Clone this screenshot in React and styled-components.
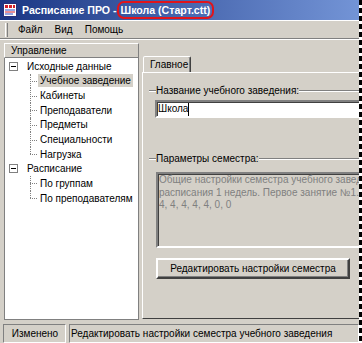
import styled, { createGlobalStyle } from "styled-components";

const GlobalStyle = createGlobalStyle`
  html, body { margin: 0; padding: 0; background: #fff; }
  body {
    font-family: "Liberation Sans", Arial, sans-serif;
    font-size: 10px;
    color: #000;
  }
`;

const Screen = styled.div`
  display: flex;
  width: 362px;
  height: 343px;
  overflow: hidden;
`;

const Frame = styled.div`
  width: 359px;
  height: 343px;
  flex: none;
  overflow: hidden;
  background: #d4d0c8;
  display: flex;
  flex-direction: column;
`;

const TornEdge = styled.div`
  width: 3px;
  flex: none;
  background: repeating-linear-gradient(to bottom, #000 0 5px, #fff 5px 8px);
`;

const TitleBar = styled.div`
  height: 20px;
  flex: none;
  display: flex;
  align-items: center;
  gap: 5px;
  padding-left: 3px;
  background: linear-gradient(to right, #1a3684, #7394d6);
  color: #fff;
  font-weight: bold;
  font-size: 10.6px;
  white-space: nowrap;
`;

const Marked = styled.span`
  border: 2px solid #e0141b;
  border-radius: 7px;
  padding: 1px 2px 1px 1px;
  margin-left: -2px;
  line-height: 12px;
`;

const MenuBar = styled.div`
  height: 17px;
  flex: none;
  display: flex;
  align-items: center;
  padding-left: 5px;
  border-top: 1px solid #fff;
  border-bottom: 1px solid #808080;
`;

const Grip = styled.div`
  width: 1px;
  height: 14px;
  border-left: 1px solid #fff;
  border-right: 1px solid #808080;
  margin-right: 4px;
`;

const MenuItem = styled.span`
  padding: 0 6px;
`;

const Body = styled.div`
  flex: 1;
  min-height: 0;
  display: flex;
  padding: 3px 0 3px 4px;
  border-top: 1px solid #fff;
`;

const LeftPane = styled.div`
  width: 135px;
  flex: none;
  display: flex;
  flex-direction: column;
`;

const PaneHeader = styled.div`
  height: 13px;
  line-height: 13px;
  padding-left: 6px;
  border: 1px solid;
  border-color: #fff #808080 #808080 #fff;
`;

const Tree = styled.div`
  flex: 1;
  background: #fff;
  border: 1px solid #808080;
  border-top: none;
  padding-top: 1px;
`;

const Row = styled.div`
  height: 14.65px;
  display: flex;
  align-items: stretch;
  padding-left: ${(p) => (p.$child ? 25 : 4)}px;
  white-space: nowrap;
`;

const Expander = styled.span`
  align-self: center;
  width: 7px;
  height: 7px;
  border: 1px solid #808080;
  margin-right: 7px;
  display: flex;
  align-items: center;
  justify-content: center;
  &::before {
    content: "";
    width: 5px;
    height: 1px;
    background: #000;
  }
`;

const Branch = styled.span`
  width: 8px;
  position: relative;
  &::before {
    content: "";
    position: absolute;
    left: 0;
    top: 0;
    height: ${(p) => (p.$last ? "50%" : "100%")};
    border-left: 1px dotted #808080;
  }
  &::after {
    content: "";
    position: absolute;
    left: 0;
    top: 50%;
    width: 7px;
    border-top: 1px dotted #808080;
  }
`;

const Label = styled.span`
  align-self: center;
  line-height: 13px;
  padding: 0 2px;
  background: ${(p) => (p.$selected ? "#d4d0c8" : "transparent")};
`;

const RightPane = styled.div`
  width: 260px;
  flex: none;
  display: flex;
  flex-direction: column;
  padding: 13px 0 1px 3px;
`;

const TabStrip = styled.div`
  display: flex;
  height: 16px;
  position: relative;
  z-index: 1;
`;

const Tab = styled.div`
  margin-left: 1px;
  width: 48px;
  height: 16px;
  line-height: 16px;
  padding-left: 6px;
  box-sizing: border-box;
  background: #d4d0c8;
  border: 1px solid;
  border-bottom: none;
  border-color: #fff #404040 transparent #fff;
  border-radius: 2px 2px 0 0;
  box-shadow: inset -1px 0 #808080;
`;

const TabPage = styled.div`
  flex: 1;
  display: flex;
  flex-direction: column;
  align-items: flex-start;
  padding: 11px 0 0 6px;
  border-top: 1px solid #fff;
  border-left: 1px solid #fff;
  border-bottom: 1px solid #404040;
`;

const SectionHeader = styled.div`
  align-self: stretch;
  display: flex;
  align-items: center;
  height: 13px;
  margin-top: ${(p) => p.$top || 0}px;
  white-space: nowrap;
  &::before,
  &::after {
    content: "";
    height: 0;
    border-top: 1px solid #808080;
    border-bottom: 1px solid #fff;
  }
  &::before {
    width: 7px;
  }
  &::after {
    flex: 1;
  }
`;

const TextInput = styled.div`
  margin: 3px 0 0 6px;
  width: 230px;
  height: 14px;
  line-height: 14px;
  background: #fff;
  border: 2px solid;
  border-color: #808080 #fff #fff #808080;
  box-shadow: inset 1px 1px #404040;
  padding-left: 1px;
  display: flex;
  align-items: center;
`;

const Caret = styled.span`
  width: 1px;
  height: 13px;
  background: #000;
`;

const Memo = styled.div`
  margin: 7px 0 0 7px;
  width: 230px;
  height: 72px;
  border: 2px solid;
  border-color: #808080 #fff #fff #808080;
  box-shadow: inset 1px 1px #404040;
  padding-left: 1px;
  color: #808080;
  line-height: 12.5px;
  white-space: nowrap;
  overflow: hidden;
`;

const Button = styled.div`
  margin: 10px 0 0 7px;
  width: 190px;
  height: 17px;
  line-height: 17px;
  text-align: center;
  border: 2px solid;
  border-color: #fff #404040 #404040 #fff;
  box-shadow: inset -1px -1px #808080;
`;

const StatusBar = styled.div`
  height: 20px;
  flex: none;
  display: flex;
  gap: 3px;
  padding: 1px 0 0 3px;
  box-sizing: border-box;
`;

const StatusPanel = styled.div`
  width: ${(p) => p.$width}px;
  flex: ${(p) => (p.$width ? "none" : 1)};
  height: 17px;
  line-height: 17px;
  padding-left: 1px;
  text-align: ${(p) => (p.$center ? "center" : "left")};
  border: 1px solid;
  border-color: #808080 #fff #fff #808080;
  white-space: nowrap;
  overflow: hidden;
`;

function AppIcon() {
  return (
    <svg width="14" height="14" viewBox="0 0 14 14">
      <rect x="0.5" y="0.5" width="13" height="13" fill="#fff" stroke="#27307a" />
      <path d="M2 2h3v3H2zM6 2h3v3H6zM10 2h2v3h-2z" fill="#d2202a" />
      <path d="M2 7h10M2 11h8" stroke="#2b4dc8" />
      <path d="M2 9h10" stroke="#d2202a" />
    </svg>
  );
}

const tree = [
  {
    label: "Исходные данные",
    children: ["Учебное заведение", "Кабинеты", "Преподаватели", "Предметы", "Специальности", "Нагрузка"],
  },
  { label: "Расписание", children: ["По группам", "По преподавателям"] },
];

export default function App() {
  return (
    <>
      <GlobalStyle />
      <Screen>
        <Frame>
          <TitleBar>
            <AppIcon />
            <span>
              Расписание ПРО - <Marked>Школа (Старт.ctt)</Marked>
            </span>
          </TitleBar>
          <MenuBar>
            <Grip />
            <MenuItem>Файл</MenuItem>
            <MenuItem>Вид</MenuItem>
            <MenuItem>Помощь</MenuItem>
          </MenuBar>
          <Body>
            <LeftPane>
              <PaneHeader>Управление</PaneHeader>
              <Tree>
                {tree.map((node) => (
                  <div key={node.label}>
                    <Row>
                      <Expander />
                      <Label>{node.label}</Label>
                    </Row>
                    {node.children.map((c, i) => (
                      <Row $child key={c}>
                        <Branch $last={i === node.children.length - 1} />
                        <Label $selected={c === "Учебное заведение"}>{c}</Label>
                      </Row>
                    ))}
                  </div>
                ))}
              </Tree>
            </LeftPane>
            <RightPane>
              <TabStrip>
                <Tab>Главное</Tab>
              </TabStrip>
              <TabPage>
                <SectionHeader>Название учебного заведения:</SectionHeader>
                <TextInput>
                  Школа
                  <Caret />
                </TextInput>
                <SectionHeader $top={34}>Параметры семестра:</SectionHeader>
                <Memo>
                  Общие настройки семестра учебного заведения. Сетка
                  <br />
                  расписания 1 недель. Первое занятие №1. Максимум
                  <br />
                  4, 4, 4, 4, 4, 0, 0
                </Memo>
                <Button>Редактировать настройки семестра</Button>
              </TabPage>
            </RightPane>
          </Body>
          <StatusBar>
            <StatusPanel $width={60} $center>
              Изменено
            </StatusPanel>
            <StatusPanel>Редактировать настройки семестра учебного заведения</StatusPanel>
          </StatusBar>
        </Frame>
        <TornEdge />
      </Screen>
    </>
  );
}
